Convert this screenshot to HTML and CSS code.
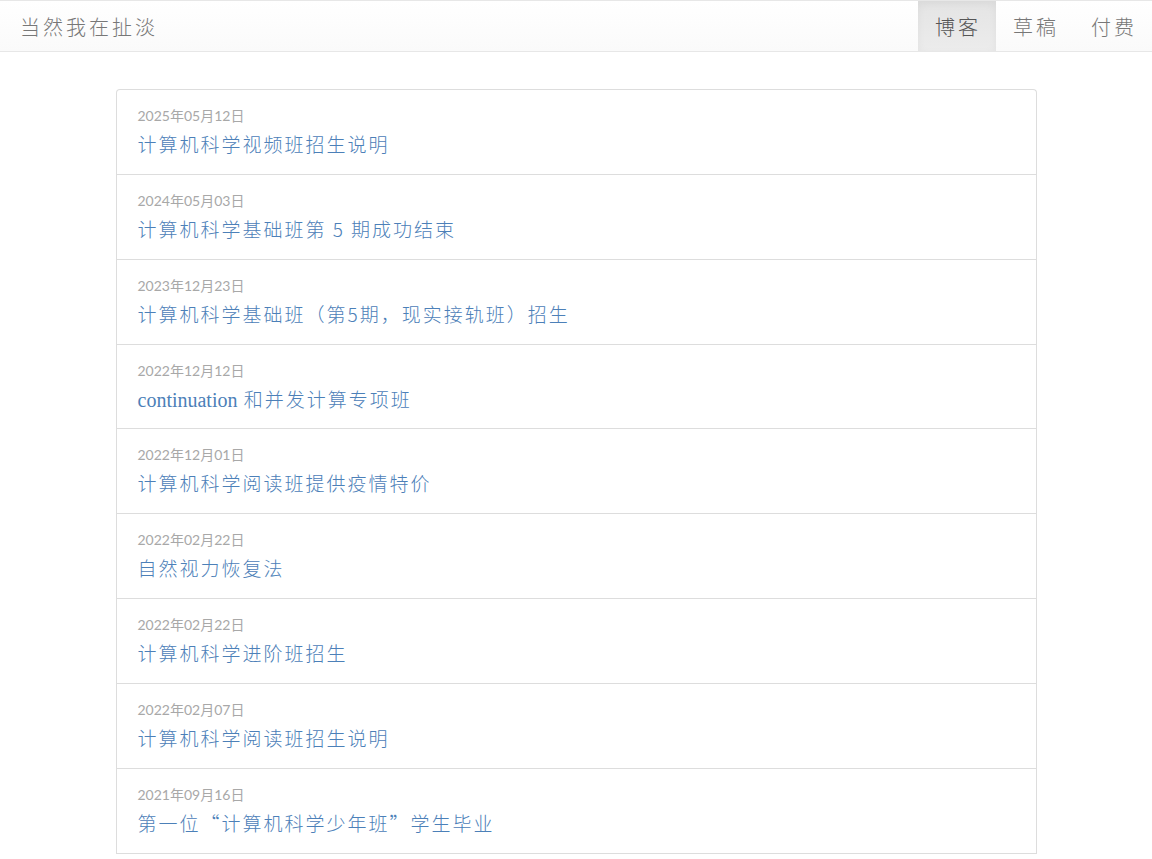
FILE: index.html
```html
<!DOCTYPE html>
<html lang="zh-CN">
<head>
    <meta charset="UTF-8">
    <meta name="viewport" content="width=device-width, initial-scale=1.0">
    <title>当然我在扯淡</title>
    <link rel="stylesheet" href="styles.css">
</head>
<body>

<nav class="navbar">
    <a class="brand" href="#">当然我在扯淡</a>
    <ul class="nav">
        <li class="active"><a href="#">博客</a></li>
        <li><a href="#">草稿</a></li>
        <li><a href="#">付费</a></li>
    </ul>
</nav>

<div class="list">
    <a class="item" href="#">
        <div class="date">2025年05月12日</div>
        <div class="title">计算机科学视频班招生说明</div>
    </a>
    <a class="item" href="#">
        <div class="date">2024年05月03日</div>
        <div class="title">计算机科学基础班第 5 期成功结束</div>
    </a>
    <a class="item" href="#">
        <div class="date">2023年12月23日</div>
        <div class="title">计算机科学基础班（第5期，现实接轨班）招生</div>
    </a>
    <a class="item short" href="#">
        <div class="date">2022年12月12日</div>
        <div class="title"><span class="latin">continuation</span> 和并发计算专项班</div>
    </a>
    <a class="item" href="#">
        <div class="date">2022年12月01日</div>
        <div class="title">计算机科学阅读班提供疫情特价</div>
    </a>
    <a class="item" href="#">
        <div class="date">2022年02月22日</div>
        <div class="title">自然视力恢复法</div>
    </a>
    <a class="item" href="#">
        <div class="date">2022年02月22日</div>
        <div class="title">计算机科学进阶班招生</div>
    </a>
    <a class="item" href="#">
        <div class="date">2022年02月07日</div>
        <div class="title">计算机科学阅读班招生说明</div>
    </a>
    <a class="item" href="#">
        <div class="date">2021年09月16日</div>
        <div class="title">第一位“计算机科学少年班”学生毕业</div>
    </a>
</div>

</body>
</html>
```

FILE: styles.css
```css
body {
    margin: 0;
    background-color: #fff;
    font-family: "Noto Sans CJK SC", sans-serif;
}
a {
    text-decoration: none;
}
.navbar {
    display: flex;
    justify-content: space-between;
    align-items: stretch;
    height: 50px;
    border-top: 1px solid #e7e7e7;
    border-bottom: 1px solid #e7e7e7;
    background-image: linear-gradient(to bottom, #fff 0, #fafafa 100%);
}
.brand {
    display: flex;
    align-items: center;
    padding: 0 20px;
    font-size: 20px;
    letter-spacing: 3px;
    color: #777;
    font-weight: 300;
}
.nav {
    display: flex;
    margin: 0;
    padding: 0;
    list-style: none;
}
.nav li a {
    display: flex;
    align-items: center;
    height: 100%;
    padding: 0 15px 0 17px;
    font-size: 20px;
    letter-spacing: 3px;
    color: #777;
    font-weight: 300;
}
.nav li.active a {
    color: #555;
    background-image: linear-gradient(to bottom, #e4e4e4 0, #ececec 100%);
    box-shadow: inset 0 3px 9px rgba(0, 0, 0, 0.05);
}
.list {
    width: 919px;
    margin: 37px auto 0;
    border: 1px solid #ddd;
    border-bottom: none;
    border-radius: 4px 4px 0 0;
}
.item {
    display: block;
    padding: 16px 21px 16px;
    border-bottom: 1px solid #ddd;
}
.item.short {
    padding-bottom: 15px;
}
.date {
    font-family: Lato, "Noto Sans CJK SC", sans-serif;
    font-size: 14px;
    line-height: 20px;
    color: #a8a8a8;
}
.title {
    height: 28px;
    margin-top: 4px;
    font-size: 19px;
    line-height: 28px;
    letter-spacing: 2px;
    color: #4c80b8;
    font-weight: 300;
}
.title .latin {
    font-family: "Liberation Serif", serif;
    font-size: 20px;
    line-height: 1;
    letter-spacing: 0;
}
```
